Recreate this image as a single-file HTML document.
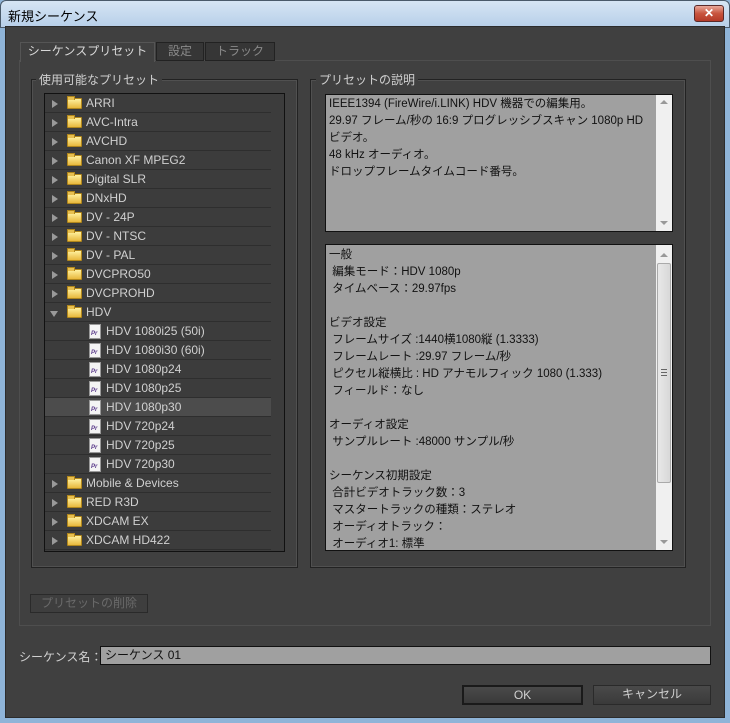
<!DOCTYPE html>
<html><head><meta charset="utf-8"><style>
*{margin:0;padding:0;box-sizing:border-box}
body{width:730px;height:723px;overflow:hidden;background:#8fb4d8;font-family:"Liberation Sans","Noto Sans CJK JP",sans-serif;font-size:12px;position:relative}
.abs{position:absolute}
#title{left:0;top:0;width:730px;height:28px;background:linear-gradient(#d6e5f4,#b7cfe9);border-radius:6px 6px 0 0;border:1px solid #4a5a6a}
#title span{position:absolute;left:7px;top:5px;font-size:13px;color:#000}
#close{left:694px;top:5px;width:30px;height:17px;border:1px solid #5a2a2a;border-radius:3px;background:linear-gradient(#e8a89a,#c8543e 50%,#b43a28);color:#fff;font-size:12px;font-weight:bold;text-align:center;line-height:15px}
#main{left:5px;top:26px;width:720px;height:692px;background:#404040;border:1px solid #2c2c2c}
.tab{top:42px;height:19px;border:1px solid #222;color:#8a8a8a;text-align:center;line-height:17px;background:#363636}
.tab.on{background:#404040;color:#d8d8d8;border-color:#555;border-bottom:none;height:20px}
.frame{border:1px solid #4e4e4e}
.frame2{border:1px solid #222;box-shadow:inset 0 0 0 1px #505050}
.legend{background:#404040;color:#d0d0d0;padding:0 3px;font-size:12px}
#list{left:44px;top:93px;width:241px;height:459px;border:1px solid #111;background:#3c3c3c;overflow:hidden}
.row{position:absolute;left:0;width:226px;height:19px;border-bottom:1px solid #2e2e2e;color:#d0d0d0;font-size:12px;line-height:18px}
.row.sel{background:#4c4c4c}
.arr{position:absolute;left:7px;top:6px;width:0;height:0;border-left:6px solid #9a9a9a;border-top:4px solid transparent;border-bottom:4px solid transparent}
.arr.d{left:5px;top:8px;border-top:6px solid #9a9a9a;border-left:4px solid transparent;border-right:4px solid transparent;border-bottom:none}
.fold{position:absolute;left:22px;top:4px;width:15px;height:11px;background:linear-gradient(#fff1a0,#e8b83c);border:1px solid #b0861c;border-radius:1px}
.fold:before{content:"";position:absolute;left:-1px;top:-3px;width:6px;height:3px;background:#e8c050;border:1px solid #b0861c;border-bottom:none}
.doc{position:absolute;left:44px;top:2px;width:12px;height:15px;background:#f4f4f4;border:1px solid #999;font-size:6px;color:#5a3a8a;font-weight:bold;line-height:7px;padding-left:1px;padding-top:6px}
.txt{position:absolute;left:41px}
.txt2{position:absolute;left:61px}
#vs{left:270px;top:0;width:14px;height:457px;background:#2c2c2c;border-left:1px solid #1a1a1a}
.box{background:#a0a0a0;border:1px solid #111;color:#111;font-size:11.5px;line-height:17px;overflow:hidden}
.sb{position:absolute;right:0;top:0;width:16px;bottom:0;background:#f0f0f0}
.btn{border:1px solid #2a2a2a;background:linear-gradient(#4a4a4a,#3a3a3a);color:#d0d0d0;text-align:center;line-height:17px;font-size:12px}
</style></head><body>
<div id="title" class="abs"><span>新規シーケンス</span></div>
<div id="close" class="abs">✕</div>
<div id="main" class="abs"></div>

<div class="abs frame" style="left:19px;top:60px;width:692px;height:566px"></div>
<div class="abs tab on" style="left:20px;width:135px">シーケンスプリセット</div>
<div class="abs tab" style="left:156px;width:48px">設定</div>
<div class="abs tab" style="left:205px;width:70px">トラック</div>

<div class="abs frame2" style="left:31px;top:79px;width:267px;height:489px"></div>
<div class="abs legend" style="left:36px;top:71px">使用可能なプリセット</div>
<div class="abs frame2" style="left:310px;top:79px;width:376px;height:489px"></div>
<div class="abs legend" style="left:316px;top:71px">プリセットの説明</div>

<div id="list" class="abs">
<div class="row" style="top:0"><i class="arr"></i><i class="fold"></i><span class="txt">ARRI</span></div>
<div class="row" style="top:19px"><i class="arr"></i><i class="fold"></i><span class="txt">AVC-Intra</span></div>
<div class="row" style="top:38px"><i class="arr"></i><i class="fold"></i><span class="txt">AVCHD</span></div>
<div class="row" style="top:57px"><i class="arr"></i><i class="fold"></i><span class="txt">Canon XF MPEG2</span></div>
<div class="row" style="top:76px"><i class="arr"></i><i class="fold"></i><span class="txt">Digital SLR</span></div>
<div class="row" style="top:95px"><i class="arr"></i><i class="fold"></i><span class="txt">DNxHD</span></div>
<div class="row" style="top:114px"><i class="arr"></i><i class="fold"></i><span class="txt">DV - 24P</span></div>
<div class="row" style="top:133px"><i class="arr"></i><i class="fold"></i><span class="txt">DV - NTSC</span></div>
<div class="row" style="top:152px"><i class="arr"></i><i class="fold"></i><span class="txt">DV - PAL</span></div>
<div class="row" style="top:171px"><i class="arr"></i><i class="fold"></i><span class="txt">DVCPRO50</span></div>
<div class="row" style="top:190px"><i class="arr"></i><i class="fold"></i><span class="txt">DVCPROHD</span></div>
<div class="row" style="top:209px"><i class="arr d"></i><i class="fold"></i><span class="txt">HDV</span></div>
<div class="row" style="top:228px"><i class="doc">Pr</i><span class="txt2">HDV 1080i25 (50i)</span></div>
<div class="row" style="top:247px"><i class="doc">Pr</i><span class="txt2">HDV 1080i30 (60i)</span></div>
<div class="row" style="top:266px"><i class="doc">Pr</i><span class="txt2">HDV 1080p24</span></div>
<div class="row" style="top:285px"><i class="doc">Pr</i><span class="txt2">HDV 1080p25</span></div>
<div class="row sel" style="top:304px"><i class="doc">Pr</i><span class="txt2">HDV 1080p30</span></div>
<div class="row" style="top:323px"><i class="doc">Pr</i><span class="txt2">HDV 720p24</span></div>
<div class="row" style="top:342px"><i class="doc">Pr</i><span class="txt2">HDV 720p25</span></div>
<div class="row" style="top:361px"><i class="doc">Pr</i><span class="txt2">HDV 720p30</span></div>
<div class="row" style="top:380px"><i class="arr"></i><i class="fold"></i><span class="txt">Mobile &amp; Devices</span></div>
<div class="row" style="top:399px"><i class="arr"></i><i class="fold"></i><span class="txt">RED R3D</span></div>
<div class="row" style="top:418px"><i class="arr"></i><i class="fold"></i><span class="txt">XDCAM EX</span></div>
<div class="row" style="top:437px"><i class="arr"></i><i class="fold"></i><span class="txt">XDCAM HD422</span></div>
<div id="vs" class="abs"><div style="position:absolute;left:4px;top:5px;border-bottom:5px solid #bbb;border-left:4px solid transparent;border-right:4px solid transparent"></div><div style="position:absolute;left:0;top:16px;width:13px;height:426px;border:1px solid #1a1a1a;background:#333"></div><div style="position:absolute;left:4px;bottom:5px;border-top:5px solid #888;border-left:4px solid transparent;border-right:4px solid transparent"></div></div>
</div>

<div class="abs box" style="left:325px;top:94px;width:348px;height:138px;padding:1px 3px">
IEEE1394 (FireWire/i.LINK) HDV 機器での編集用。<br>29.97 フレーム/秒の 16:9 プログレッシブスキャン 1080p HD<br>ビデオ。<br>48 kHz オーディオ。<br>ドロップフレームタイムコード番号。
<div class="sb"><div style="position:absolute;left:4px;top:5px;border-bottom:4px solid #999;border-left:4px solid transparent;border-right:4px solid transparent"></div><div style="position:absolute;left:4px;bottom:6px;border-top:4px solid #999;border-left:4px solid transparent;border-right:4px solid transparent"></div></div>
</div>

<div class="abs box" style="left:325px;top:244px;width:348px;height:307px;padding:2px 3px 0;white-space:pre">一般
 編集モード：HDV 1080p
 タイムベース：29.97fps

ビデオ設定
 フレームサイズ :1440横1080縦 (1.3333)
 フレームレート :29.97 フレーム/秒
 ピクセル縦横比 : HD アナモルフィック 1080 (1.333)
 フィールド：なし

オーディオ設定
 サンプルレート :48000 サンプル/秒

シーケンス初期設定
 合計ビデオトラック数：3
 マスタートラックの種類：ステレオ
 オーディオトラック：
 オーディオ1: 標準
<div class="sb"><div style="position:absolute;left:4px;top:8px;border-bottom:4px solid #999;border-left:4px solid transparent;border-right:4px solid transparent"></div><div style="position:absolute;left:1px;top:18px;width:14px;height:220px;border:1px solid #aaa;border-radius:2px;background:linear-gradient(90deg,#e8e8e8,#d8d8d8)"></div><div style="position:absolute;left:5px;top:124px;width:6px;height:7px;border-top:1px solid #666;border-bottom:1px solid #666"><div style="margin-top:2px;border-top:1px solid #666"></div></div><div style="position:absolute;left:4px;bottom:6px;border-top:4px solid #999;border-left:4px solid transparent;border-right:4px solid transparent"></div></div>
</div>

<div class="abs btn" style="left:30px;top:594px;width:118px;height:19px;color:#6a6a6a;background:#3e3e3e">プリセットの削除</div>
<div class="abs" style="left:19px;top:648px;color:#d0d0d0">シーケンス名：</div>
<div class="abs" style="left:100px;top:646px;width:611px;height:19px;background:#a0a0a0;border:1px solid #111;color:#111;padding-left:4px;line-height:17px">シーケンス 01</div>
<div class="abs btn" style="left:462px;top:685px;width:121px;height:20px;border:2px solid #1a1a1a">OK</div>
<div class="abs btn" style="left:593px;top:685px;width:118px;height:20px">キャンセル</div>
</body></html>
